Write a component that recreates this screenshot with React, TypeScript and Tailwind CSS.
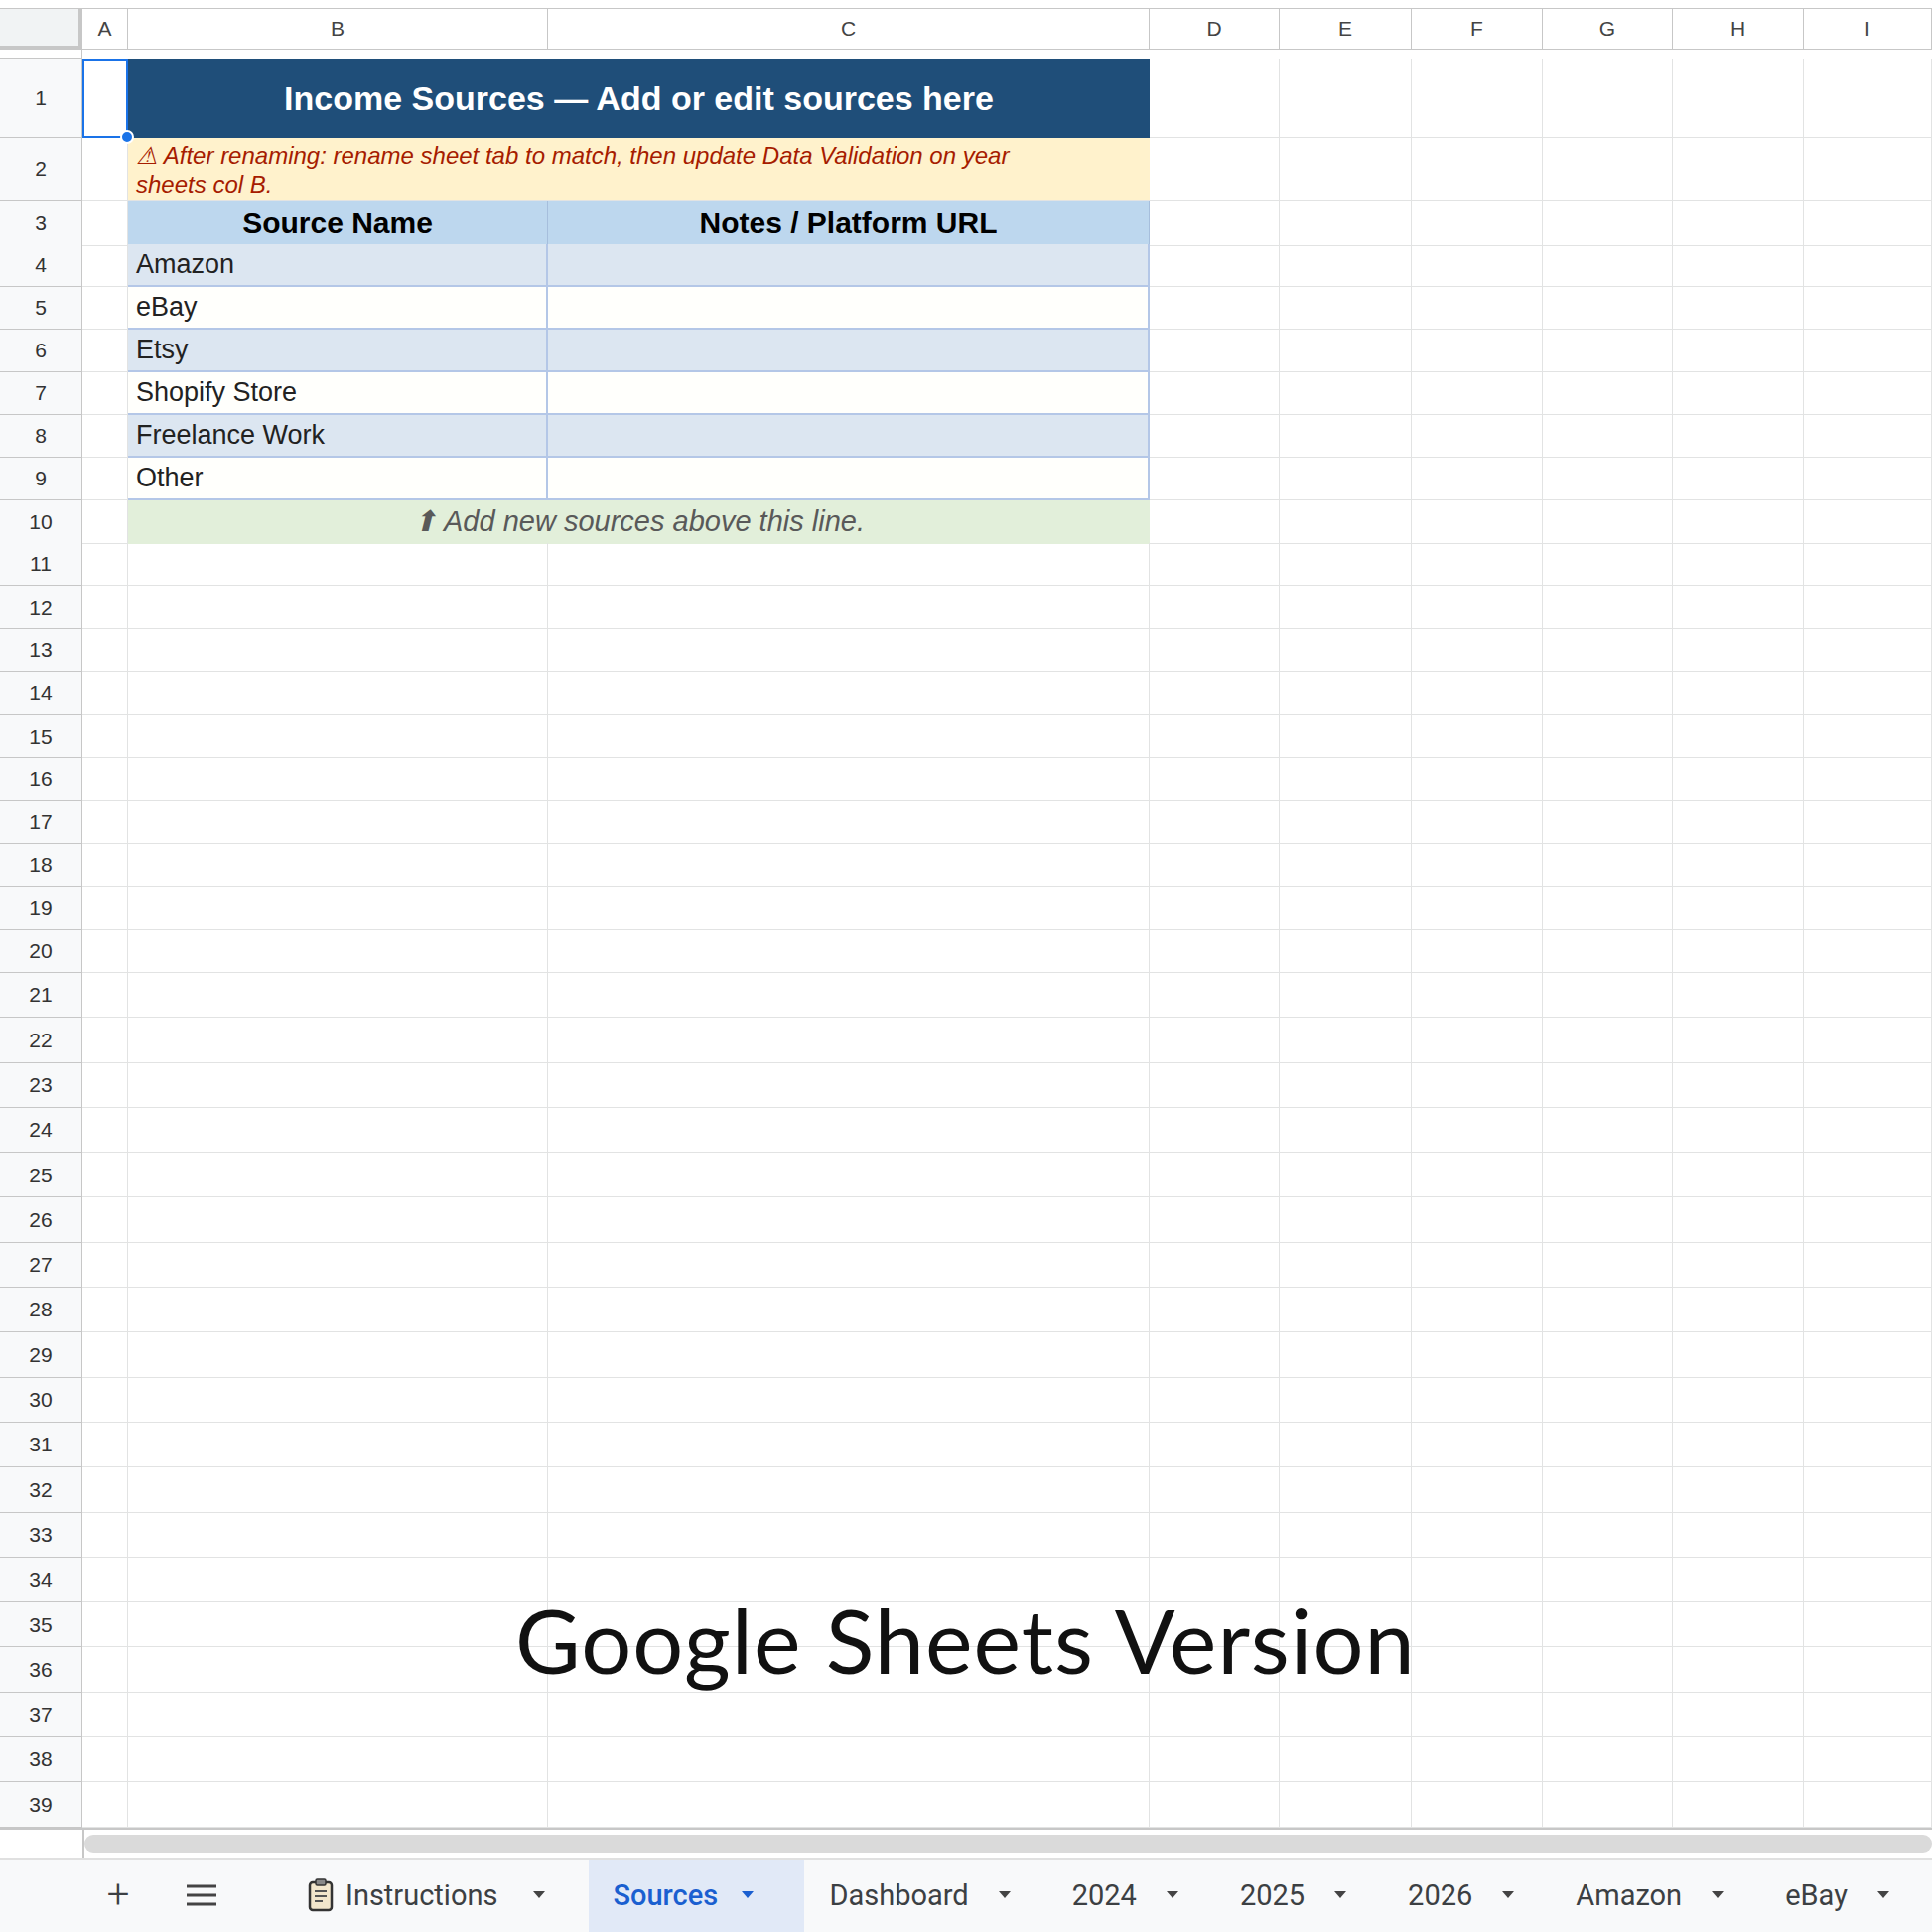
import React from "react";

const cols = "grid grid-cols-[83px_46px_423px_606px_131px_133px_132px_131px_132px_1fr]";
const cell = "border-r border-b border-[#e2e3e3] h-full";
const rn = "border-r border-b border-[#c7c7c7] bg-[#f8f9fa] flex items-center justify-center text-[21px] text-[#333] h-full";

function Empty({ from }: { from: number }) {
  const n = 10 - from;
  return <>{Array.from({ length: n }).map((_, i) => <div key={i} className={cell} />)}</>;
}

const data = [
  ["Amazon", true], ["eBay", false], ["Etsy", true], ["Shopify Store", false], ["Freelance Work", true], ["Other", false],
] as const;

function Caret({ c = "#444" }: { c?: string }) {
  return <svg width="12" height="8" viewBox="0 0 12 8"><path d="M0 0h12L6 7z" fill={c} /></svg>;
}

export default function App() {
  const tabs = ["Dashboard", "2024", "2025", "2026", "Amazon", "eBay"];
  return (
    <div className="w-[1946px] h-[1946px] bg-white relative overflow-hidden flex flex-col" style={{ fontFamily: "Arial, 'Liberation Sans', sans-serif" }}>
      <div className="h-[9px] bg-white border-b border-[#c7c7c7]" />
      <div className={`${cols} h-[50px]`}>
        <div className="bg-[#f1f3f4] border-r-4 border-b-4 border-[#c7c7c7] h-full" />
        {["A", "B", "C", "D", "E", "F", "G", "H", "I", ""].map((l, i) => (
          <div key={i} className="border-r border-b border-[#c7c7c7] flex items-center justify-center text-[21px] text-[#444] bg-white h-full">{l}</div>
        ))}
      </div>
      <div className={`${cols} h-[80px]`}>
        <div className={rn}>1</div>
        <div className="relative border-2 border-[#1a73e8] h-full">
          <div className="absolute -right-[8px] -bottom-[8px] w-[14px] h-[14px] rounded-full bg-[#1a73e8] border-2 border-white z-10" />
        </div>
        <div className="col-span-2 bg-[#1f4e79] text-white font-bold text-[34px] flex items-center justify-center h-full">Income Sources — Add or edit sources here</div>
        <Empty from={4} />
      </div>
      <div className={`${cols} h-[63px]`}>
        <div className={rn}>2</div>
        <div className={cell} />
        <div className="col-span-2 bg-[#fff2cc] text-[#a61c00] italic text-[24px] leading-[29px] pl-2 pr-[70px] pt-[3px] h-full border-b border-[#e2e3e3]">⚠ After renaming: rename sheet tab to match, then update Data Validation on year sheets col B.</div>
        <Empty from={4} />
      </div>
      <div className={`${cols} h-[44px]`}>
        <div className={rn}>3</div>
        <div className={cell} />
        <div className="bg-[#bdd7ee] border-r border-b border-[#a6bedc] font-bold text-[30px] flex items-center justify-center h-full">Source Name</div>
        <div className="bg-[#bdd7ee] border-r border-b border-[#a6bedc] font-bold text-[30px] flex items-center justify-center h-full">Notes / Platform URL</div>
        <Empty from={4} />
      </div>
      {data.map(([name, alt], i) => (
        <div key={name} className={`${cols} h-[43px]`}>
          <div className={rn}>{i + 4}</div>
          <div className={cell} />
          <div className={`${alt ? "bg-[#dce6f1]" : "bg-[#fffffc]"} border-r-2 border-b-2 border-[#b4c7e7] text-[27px] text-[#222] flex items-center px-2 h-full`}>{name}</div>
          <div className={`${alt ? "bg-[#dce6f1]" : "bg-[#fffffc]"} border-r-2 border-b-2 border-[#b4c7e7] h-full`} />
          <Empty from={4} />
        </div>
      ))}
      <div className={`${cols} h-[43px]`}>
        <div className={rn}>10</div>
        <div className={cell} />
        <div className="col-span-2 bg-[#e2efda] italic text-[#595959] text-[29px] flex items-center justify-center h-full">⬆&#xFE0E; Add new sources above this line.</div>
        <Empty from={4} />
      </div>
      {Array.from({ length: 29 }).map((_, i) => (
        <div key={i} className={`${cols} ${i < 10 ? "h-[43.3px]" : "h-[45.3px]"}`}>
          <div className={rn}>{i + 11}</div>
          <Empty from={1} />
        </div>
      ))}
      <div className="h-[30px] flex border-t-2 border-[#c7c7c7] bg-white">
        <div className="w-[85px] border-r-2 border-[#c7c7c7]" />
        <div className="flex-1 my-[5px] rounded-full bg-[#dadada]" />
      </div>
      <div className="flex-1 bg-[#f8f9fa] border-t-2 border-[#e0e0e0] flex items-center text-[29px] text-[#3c4043]" style={{ fontFamily: "Roboto, 'Noto Sans', sans-serif" }}>
        <div className="w-[104px]" />
        <span className="text-[40px] font-light w-[30px] text-center">+</span>
        <div className="w-[52px]" />
        <svg width="34" height="24" viewBox="0 0 34 24"><path d="M2 3h30M2 12h30M2 21h30" stroke="#444" strokeWidth="3" /></svg>
        <div className="w-[90px]" />
        <div className="flex items-center gap-[12px]">
          <svg width="26" height="34" viewBox="0 0 26 34"><rect x="2" y="4" width="22" height="28" rx="3" fill="#f2e6cc" stroke="#333" strokeWidth="2.5" /><rect x="8" y="1" width="10" height="6" rx="1.5" fill="#888" stroke="#333" strokeWidth="1.5" /><path d="M7 13h12M7 18h12M7 23h8" stroke="#555" strokeWidth="2" /></svg>
          <span>Instructions</span>
          <span className="ml-[24px]"><Caret /></span>
        </div>
        <div className="ml-[44px] h-full bg-[#e1e9f7] flex items-center px-[24px] gap-[24px] text-[#1a5fd0] font-medium w-[217px]">
          <span>Sources</span><Caret c="#1a5fd0" />
        </div>
        {tabs.map((t, i) => (
          <div key={t} className={`flex items-center gap-[30px] ${i === 0 ? "ml-[25px]" : "ml-[62px]"}`}>
            <span>{t}</span><Caret />
          </div>
        ))}
      </div>
      <div className="absolute left-[519px] top-[1584px] text-[90px] text-[#111] tracking-[1px]" style={{ fontFamily: "Lato, 'Noto Sans', sans-serif" }}>Google Sheets Version</div>
    </div>
  );
}
